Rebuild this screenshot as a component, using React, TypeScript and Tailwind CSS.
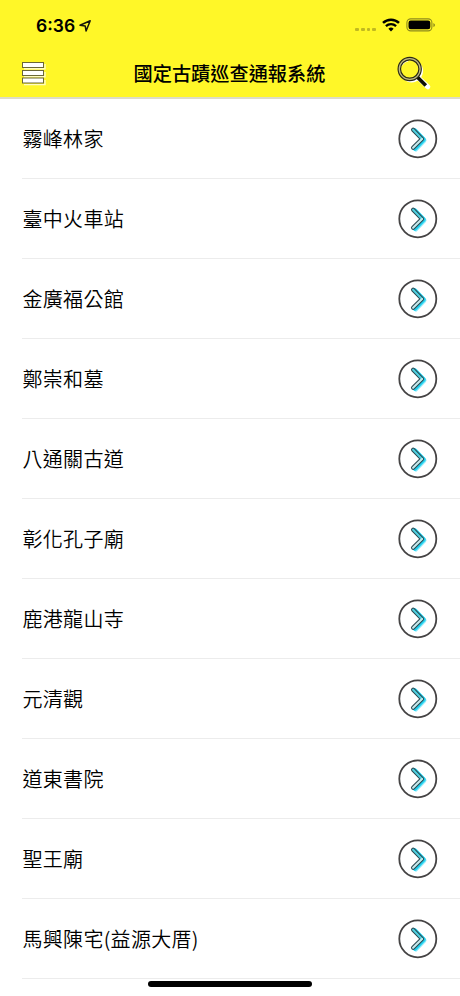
const sites = [
  "霧峰林家",
  "臺中火車站",
  "金廣福公館",
  "鄭崇和墓",
  "八通關古道",
  "彰化孔子廟",
  "鹿港龍山寺",
  "元清觀",
  "道東書院",
  "聖王廟",
  "馬興陳宅(益源大厝)",
];

const LocationArrow = () => (
  <svg width="14" height="14" viewBox="0 0 14 14" fill="none">
    <path
      d="M2 6.3 L12.2 1.8 L8.1 12 L7.2 6.9 Z"
      stroke="#17160a"
      strokeWidth="1.5"
      strokeLinejoin="round"
    />
  </svg>
);

const WifiIcon = () => (
  <svg width="18" height="14" viewBox="0 0 18 14" fill="none">
    <path d="M1 4.9 A11.6 11.6 0 0 1 17 4.9" stroke="#000" strokeWidth="2.5" />
    <path d="M3.9 8.1 A7.4 7.4 0 0 1 14.1 8.1" stroke="#000" strokeWidth="2.3" />
    <path d="M9 13.4 L6.4 10.8 A3.8 3.8 0 0 1 11.6 10.8 Z" fill="#000" />
  </svg>
);

const BatteryIcon = () => (
  <svg width="30" height="14" viewBox="0 0 30 14" fill="none">
    <rect x="0.9" y="0.9" width="25" height="12" rx="3.8" stroke="#8f8b1c" strokeWidth="1.1" />
    <rect x="2.5" y="2.5" width="21.8" height="8.8" rx="2.2" fill="#000" />
    <path d="M27.4 4.9 Q29 5.6 29 7 Q29 8.4 27.4 9.1 Z" fill="#8f8b1c" />
  </svg>
);

const MenuIcon = () => (
  <svg width="24" height="24" viewBox="0 0 24 24" fill="none">
    <path d="M2 6.8 H23 V2 M2 14.8 H23 V10 M2 22.6 H23 V18" stroke="#fffcc4" strokeWidth="1.4" />
    <g fill="#fff" stroke="#6b6738" strokeWidth="1">
      <rect x="0.5" y="0.5" width="21" height="5" />
      <rect x="0.5" y="8.5" width="21" height="5" />
      <rect x="0.5" y="16" width="21" height="5" />
    </g>
  </svg>
);

const SearchIcon = () => (
  <svg width="36" height="36" viewBox="0 0 36 36" fill="none">
    <circle cx="15.6" cy="15" r="11.4" fill="#fff" />
    <path d="M23 22.5 L31.8 30.8" stroke="#fff" strokeWidth="5" strokeLinecap="round" />
    <circle cx="13.7" cy="13" r="10" fill="#fff728" />
    <path d="M5.5 9 A9 9 0 0 1 12 4.4" stroke="#fff" strokeWidth="2.4" />
    <path d="M20.8 20.4 L29.8 29.6" stroke="#100f05" strokeWidth="3.6" />
    <circle cx="13.7" cy="13" r="10.4" stroke="#2b2916" strokeWidth="3.6" />
    <circle cx="13.7" cy="13" r="10.4" stroke="#c0bc80" strokeWidth="1.3" />
  </svg>
);

const ArrowIcon = () => (
  <svg width="40" height="40" viewBox="0 0 40 40" fill="none">
    <circle cx="19.8" cy="19.8" r="18.5" fill="#fff" stroke="#454344" strokeWidth="1.8" />
    <g strokeLinecap="round" strokeLinejoin="round">
      <path d="M17.6 12.4 L26.2 21.4 L17.8 30.2" stroke="#8feafa" strokeWidth="4.6" />
      <path d="M16.6 11.4 L25.6 20.6 L17 29.6" stroke="#1fd0ee" strokeWidth="4.4" />
      <path d="M15.1 10.7 L24 19.9 L15.1 28.8" stroke="#2b4850" strokeWidth="4.2" />
      <path d="M15.1 10.7 L24 19.9" stroke="#4fd0e0" strokeWidth="2.1" />
      <path d="M24 19.9 L15.1 28.8" stroke="#c4e9ec" strokeWidth="2.1" />
    </g>
  </svg>
);

const StatusBar = () => (
  <div className="flex h-[50px] items-center justify-between pl-9 pr-6">
    <div className="flex items-center gap-[3px] pt-px">
      <span className="font-['Inter','Liberation_Sans',sans-serif] text-[17.5px] font-semibold leading-none">
        6:36
      </span>
      <LocationArrow />
    </div>
    <div className="flex items-center">
      <div className="mr-1.5 mt-[9px] flex gap-[2px]">
        {[0, 1, 2, 3].map((dot) => (
          <span key={dot} className="size-[3.7px] rounded-[1px] bg-[#c1b91f]" />
        ))}
      </div>
      <WifiIcon />
      <div className="ml-1.5">
        <BatteryIcon />
      </div>
    </div>
  </div>
);

const App = () => {
  return (
    <div className="relative h-[996px] w-[460px] overflow-hidden bg-white font-['Noto_Sans_CJK_TC',sans-serif] text-black">
      <header className="h-[99px] border-b-2 border-[#dddcc8] bg-[#fff728]">
        <StatusBar />
        <div className="flex h-[47px] items-center justify-between pl-[22px] pr-[28px]">
          <button type="button" aria-label="選單" className="w-[41px]">
            <MenuIcon />
          </button>
          <h1 className="text-[19.2px] font-medium leading-none">國定古蹟巡查通報系統</h1>
          <button type="button" aria-label="搜尋">
            <SearchIcon />
          </button>
        </div>
      </header>

      <ul className="pl-[22px]">
        {sites.map((site) => (
          <li
            key={site}
            className="flex h-20 items-center justify-between border-b border-[#ececec] pr-[22px]"
          >
            <span className="pl-[0.5px] text-[20px] font-[350] leading-none tracking-[0.3px]">
              {site}
            </span>
            <ArrowIcon />
          </li>
        ))}
      </ul>

      {/* home indicator */}
      <div className="absolute bottom-[9px] left-[148px] h-[6px] w-[164px] rounded-full bg-black" />
    </div>
  );
};

export default App;
